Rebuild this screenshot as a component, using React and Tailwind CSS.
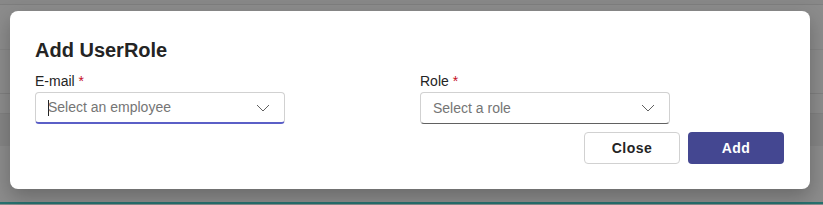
import React from "react";

function Chevron() {
  return (
    <svg width="14" height="8" viewBox="0 0 14 8" fill="none" className="shrink-0">
      <path d="M1 1l6 6 6-6" stroke="#616161" strokeWidth="1" />
    </svg>
  );
}

function SelectField({ label, placeholder, focused }) {
  return (
    <div className="flex flex-col w-[250px]">
      <label className="text-[14px] leading-[20px] text-[#242424] mb-[1px]">
        {label} <span className="text-[#c50f1f]">*</span>
      </label>
      <div
        className={
          focused
            ? "relative h-[32px] rounded-[4px] border border-[#d1d1d1] border-b-[#5b5fc7] border-b-2 flex items-center pl-[12px] pr-[14px] bg-white"
            : "relative h-[32px] rounded-[4px] border border-[#d1d1d1] border-b-[#616161] flex items-center pl-[12px] pr-[14px] bg-white"
        }
      >
        {focused && <span className="w-px h-[16px] bg-[#242424] -mr-px"></span>}
        <span className="flex-1 text-[14px] text-[#757575]">{placeholder}</span>
        <Chevron />
      </div>
    </div>
  );
}

function App() {
  return (
    <div
      className="relative h-[205px] w-[823px] overflow-hidden bg-[#8c8c8c]"
      style={{ fontFamily: '"Liberation Sans", Arial, sans-serif' }}
    >
      {/* page behind the overlay */}
      <div className="h-[5px] bg-[#888888] border-b border-[#7e7e7e]"></div>
      <div className="h-[45px] border-b border-[#858585]"></div>
      <div className="h-[44px] border-b border-[#7f7f7f]"></div>
      <div className="h-[20px] border-b border-[#808080]"></div>
      <div className="h-[32px] bg-[#858585]"></div>
      <div className="h-[56px]"></div>
      <div className="h-[2px] bg-[#27716f]"></div>

      {/* dialog */}
      <div className="absolute left-[10px] top-[11px] w-[800px] h-[178px] bg-white rounded-[8px] shadow-[0_8px_20px_rgba(0,0,0,0.25)] px-[25px] pt-[26px]">
        <h2 className="text-[20px] leading-[26px] font-bold text-[#242424]">Add UserRole</h2>
        <div className="flex gap-[135px] mt-[8px]">
          <SelectField label="E-mail" placeholder="Select an employee" focused />
          <SelectField label="Role" placeholder="Select a role" />
        </div>
        <div className="flex justify-end gap-[8px] mt-[8px] pr-[1px]">
          <button className="w-[96px] h-[32px] rounded-[4px] border border-[#d1d1d1] bg-white text-[14px] font-bold text-[#242424] tracking-[0.5px]">
            Close
          </button>
          <button className="w-[96px] h-[32px] rounded-[4px] bg-[#444791] text-[14px] font-bold text-white tracking-[0.5px]">
            Add
          </button>
        </div>
      </div>
    </div>
  );
}

export default App;
